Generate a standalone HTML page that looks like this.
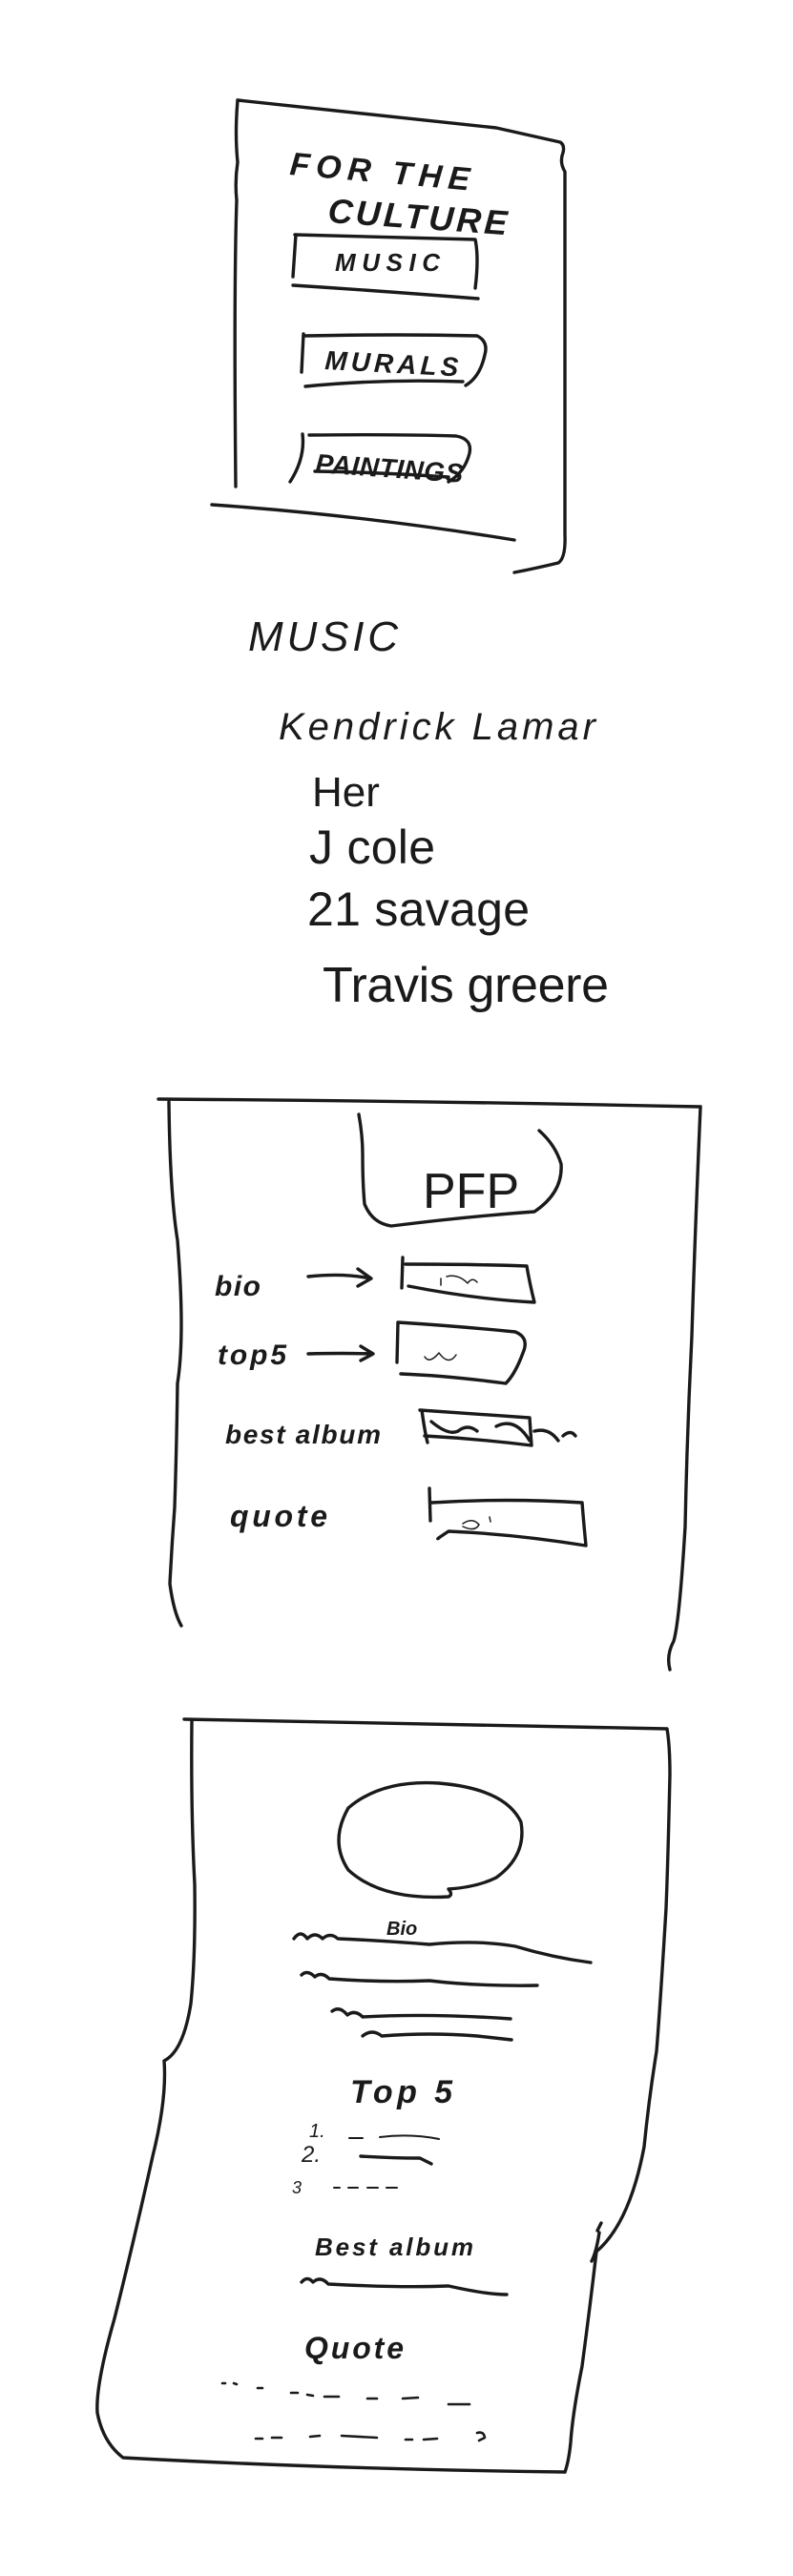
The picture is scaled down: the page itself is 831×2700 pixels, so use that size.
<!DOCTYPE html>
<html><head><meta charset="utf-8"><style>
html,body{margin:0;padding:0;background:#fff;}
svg{display:block}
text{font-family:"Liberation Sans",sans-serif;fill:#1a1a1a;}
</style></head><body>
<svg width="831" height="2700" viewBox="0 0 831 2700" xmlns="http://www.w3.org/2000/svg">
<g fill="none" stroke="#1a1a1a" stroke-width="3.4" stroke-linecap="round" stroke-linejoin="round">
<path d="M249,105 L520,134 L587,149 Q592,152 590,160 Q586,170 592,180 L592,560 Q593,585 585,590 Q560,596 539,600"/>
<path d="M249,105 Q246,140 249,170 Q246,190 248,210 Q245,300 247,510"/>
<path d="M222,529 Q380,540 539,566"/>
<path d="M310,246 L307,290 M309,246 Q400,248 498,251 Q502,270 498,302 M307,299 Q400,305 501,313"/>
<path d="M318,350 L316,390 M320,352 Q420,350 500,352 Q512,358 508,372 Q503,395 488,404 M320,405 Q400,397 485,400"/>
<path d="M317,455 Q320,480 304,505 M324,456 Q420,455 478,457 Q495,460 492,475 Q487,495 470,505 M330,494 Q400,495 470,500"/>
<path d="M166,1152 Q450,1154 734,1160"/>
<path d="M177,1155 Q178,1250 186,1300 Q194,1400 186,1450 Q185,1520 183,1580 Q180,1620 178,1660 Q182,1690 190,1704"/>
<path d="M734,1160 Q728,1300 725,1400 Q720,1500 718,1600 Q712,1700 706,1720 Q698,1735 702,1750"/>
<path d="M376,1168 Q380,1190 380,1210 Q380,1240 382,1262 Q390,1282 410,1285 Q490,1275 560,1270 Q590,1250 588,1220 Q582,1200 565,1185"/>
<path d="M323,1338 Q360,1334 388,1340 M375,1330 L389,1340 L375,1348"/>
<path d="M323,1419 Q360,1418 390,1419 M378,1411 L391,1419 L378,1426"/>
<path d="M422,1318 L421,1350 M425,1325 Q500,1325 552,1327 Q555,1345 560,1365 Q500,1362 428,1348"/>
<path d="M417,1386 L416,1428 M417,1386 Q480,1390 540,1396 Q555,1402 548,1418 Q540,1440 530,1450 Q470,1442 420,1440"/>
<path d="M440,1478 Q500,1482 555,1486 L557,1515 Q500,1508 445,1505 M442,1478 Q445,1500 448,1512 M452,1490 Q470,1505 480,1500 Q490,1492 500,1500 M520,1495 Q540,1485 555,1510 M560,1500 Q575,1496 585,1510 M590,1505 Q598,1498 603,1505"/>
<path d="M450,1560 L451,1594 M452,1575 Q530,1570 610,1575 Q612,1600 614,1620 Q540,1608 470,1605 Q455,1615 460,1612"/>
<path d="M485,1597 Q495,1590 502,1598 Q498,1606 485,1600 M513,1590 L514,1595" stroke-width="1.5"/>
<path d="M462,1347 L462,1340 M468,1338 Q480,1335 490,1345 Q495,1338 500,1344" stroke-width="1.5"/>
<path d="M445,1422 Q450,1430 460,1418 Q470,1432 478,1420" stroke-width="1.5"/>
<path d="M193,1802 Q450,1808 699,1812 Q702,1830 702,1860 Q700,1950 698,2000 Q692,2100 688,2150 Q680,2200 675,2250 Q660,2330 625,2360 Q618,2420 610,2480 Q600,2530 598,2560 Q596,2580 592,2591"/>
<path d="M201,1804 Q200,1900 204,1975 Q205,2050 200,2100 Q192,2150 172,2160 Q175,2200 160,2260 Q140,2350 120,2430 Q100,2500 102,2529 Q108,2560 129,2576 Q350,2588 592,2591"/>
<path d="M470,1988 Q400,1992 365,1960 Q345,1930 365,1895 Q400,1865 460,1869 Q530,1875 546,1910 Q552,1945 520,1968 Q500,1978 470,1980 Q475,1986 470,1988 Z"/>
<path d="M308,2032 Q315,2022 322,2032 Q330,2024 338,2032 Q346,2025 354,2032 Q400,2034 450,2038 Q500,2033 540,2040 Q580,2052 619,2057"/>
<path d="M316,2070 Q322,2064 330,2072 Q337,2066 345,2074 Q400,2078 450,2076 Q500,2082 563,2081"/>
<path d="M348,2108 Q356,2102 364,2112 Q372,2106 380,2114 Q450,2110 535,2116"/>
<path d="M380,2134 Q390,2126 400,2134 Q450,2130 500,2134 L536,2138"/>
<path d="M366,2241 L380,2241 M398,2240 Q430,2236 460,2242" stroke-width="2"/>
<path d="M378,2260 Q410,2262 440,2262 Q448,2266 452,2268"/>
<path d="M350,2293 L356,2293 M365,2293 L375,2293 M385,2293 L396,2293 M405,2293 L416,2293" stroke-width="2"/>
<path d="M316,2392 Q322,2385 328,2392 Q336,2385 344,2394 Q420,2398 470,2396 Q510,2405 531,2405"/>
<path d="M626,2338 L630,2330 M628,2340 Q625,2360 620,2370"/>
<path d="M233,2498 L236,2498 M245,2498 L248,2499 M270,2503 L275,2503 M305,2508 L312,2508 M322,2510 L328,2511 M340,2512 L355,2512 M385,2514 L395,2514 M422,2514 L438,2513 M470,2520 L492,2520" stroke-width="2.6"/>
<path d="M268,2556 L275,2556 M285,2555 L295,2555 M325,2554 L335,2553 M358,2553 L395,2555 M425,2557 L432,2557 M444,2557 L458,2556 M500,2550 Q507,2548 508,2555 L502,2558" stroke-width="2.6"/>
</g>
<g font-weight="bold" font-style="italic">
<text x="303" y="183" font-size="34" transform="rotate(5 303 183)" textLength="193" letter-spacing="4">FOR THE</text>
<text x="343" y="233" font-size="36" transform="rotate(4 343 233)" textLength="188">CULTURE</text>
<text x="351" y="284" font-size="26" textLength="110">MUSIC</text>
<text x="340" y="387" font-size="28" textLength="140" transform="rotate(3 340 387)">MURALS</text>
<text x="330" y="495" font-size="28" textLength="155" transform="rotate(4 330 495)">PAINTINGS</text>
<text x="260" y="682" font-size="44" font-weight="normal" textLength="163" letter-spacing="6">MUSIC</text>
<text x="292" y="775" font-size="40" font-weight="normal" textLength="332">Kendrick Lamar</text>
<text x="327" y="845" font-size="44" font-weight="normal" font-style="normal">Her</text>
<text x="324" y="905" font-size="50" font-weight="normal" font-style="normal" textLength="132">J cole</text>
<text x="322" y="970" font-size="50" font-weight="normal" font-style="normal" textLength="233">21 savage</text>
<text x="338" y="1050" font-size="52" font-weight="normal" font-style="normal" textLength="300">Travis greere</text>
<text x="443" y="1266" font-size="52" font-weight="normal" font-style="normal">PFP</text>
<text x="225" y="1358" font-size="30" textLength="48">bio</text>
<text x="228" y="1430" font-size="30" textLength="72">top5</text>
<text x="236" y="1513" font-size="28" textLength="163">best album</text>
<text x="241" y="1600" font-size="32" textLength="102">quote</text>
<text x="405" y="2028" font-size="20">Bio</text>
<text x="367" y="2204" font-size="34" textLength="107">Top 5</text>
<text x="324" y="2240" font-size="20" font-weight="normal">1.</text>
<text x="316" y="2266" font-size="24" font-weight="normal">2.</text>
<text x="306" y="2299" font-size="18" font-weight="normal">3</text>
<text x="330" y="2364" font-size="26" textLength="166">Best album</text>
<text x="319" y="2472" font-size="32" textLength="104">Quote</text>
</g>
</svg>
</body></html>
